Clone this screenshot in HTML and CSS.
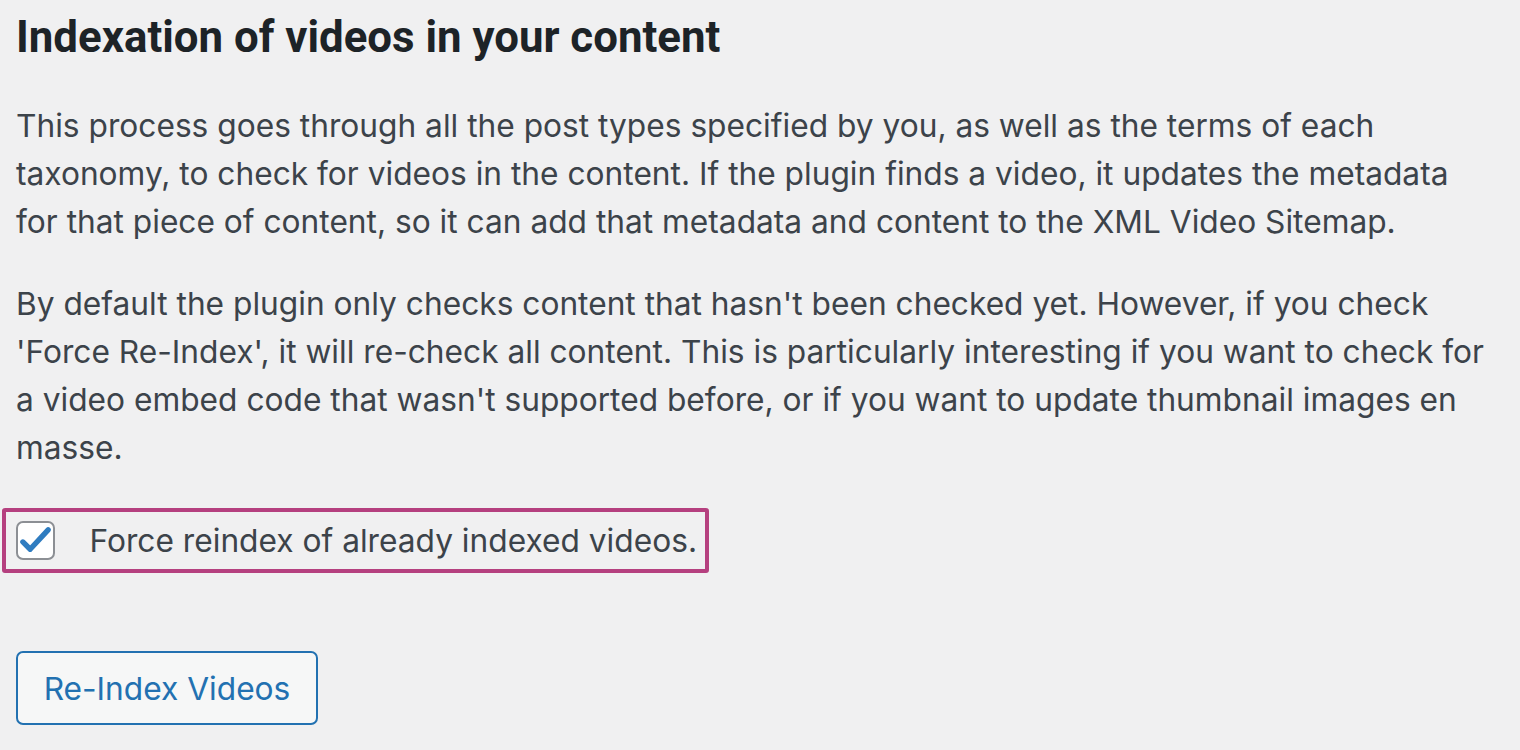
FILE: index.html
```html
<!DOCTYPE html>
<html lang="en">
<head>
    <meta charset="UTF-8">
    <title>Indexation of videos</title>
    <link rel="stylesheet" href="styles.css">
</head>
<body>
    <div class="wrap">
        <h2 class="title">Indexation of videos in your content</h2>
        <p>This process goes through all the post types specified by you, as well as the terms of each taxonomy, to check for videos in the content. If the plugin finds a video, it updates the metadata for that piece of content, so it can add that metadata and content to the XML Video Sitemap.</p>
        <p>By default the plugin only checks content that hasn't been checked yet. However, if you check 'Force Re-Index', it will re-check all content. This is particularly interesting if you want to check for a video embed code that wasn't supported before, or if you want to update thumbnail images en masse.</p>
        <div class="force">
            <label class="check">
                <span class="box">
                    <!-- blue tick, drawn a bit heavier like the WP checkbox -->
                    <svg width="36" height="36" viewBox="0 0 36 36"><path d="M5 19 L12.5 26.5 L31 6.5" fill="none" stroke="#2f7cc0" stroke-width="5.5" stroke-linecap="round" stroke-linejoin="round"/></svg>
                </span>
                <span class="label">Force reindex of already indexed videos.</span>
            </label>
        </div>
        <button class="btn">Re-Index Videos</button>
    </div>
</body>
</html>
```

FILE: styles.css
```css
*{margin: 0; padding: 0; box-sizing: border-box;}
body{
    background: #f0f0f1;
    font-family: "Inter", "Liberation Sans", Arial, sans-serif;
    color: #3c434a;
}
.wrap{
    padding: 12px 16px 0 16px;
    width: 1520px;
}
.title{
    font-family: "Roboto", "Liberation Sans", sans-serif;
    font-size: 43.8px;
    font-weight: 700;
    color: #1d2327;
    line-height: 50px;
    margin-bottom: 40px;
}
p{
    font-size: 31.7px;
    line-height: 48px;
    margin-bottom: 34px;
    width: 1475px;
}
.force{
    margin-left: -14px;
    margin-top: 2px;
    display: inline-block;
    border: 4.5px solid #b5407f;
    border-radius: 3px;
    padding: 9px 8px 9px 9.5px;
}
.check{
    display: flex;
    align-items: center;
}
.box{
    width: 39px;
    height: 39px;
    border: 2px solid #8c8f94;
    border-radius: 7px;
    background: #fff;
    display: flex;
    align-items: center;
    justify-content: center;
    margin-right: 35px;
}
.label{
    font-size: 31.7px;
}
.btn{
    margin-top: 78px;
    display: block;
    width: 302px;
    height: 74px;
    border: 2px solid #2271b1;
    border-radius: 7px;
    background: #f6f7f7;
    color: #2271b1;
    font-family: "Inter", "Liberation Sans", Arial, sans-serif;
    font-size: 31.7px;
}
```
